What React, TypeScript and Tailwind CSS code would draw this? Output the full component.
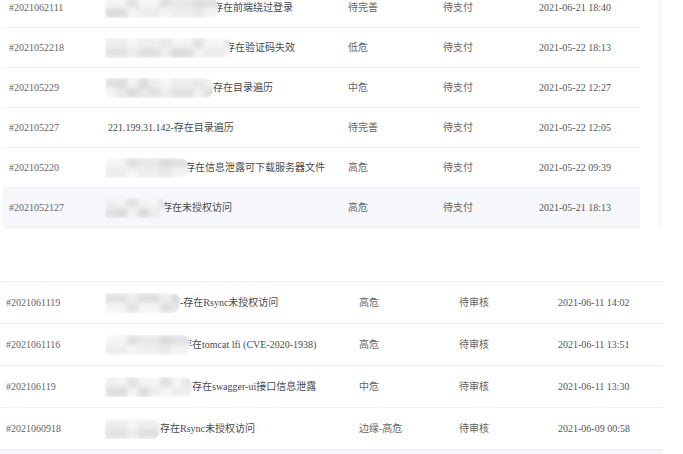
import React from "react";

const FONT = { fontFamily: '"Liberation Serif", "Noto Sans CJK SC", serif' };

function Mosaic({ w, seed, h = 20 }: { w: number; seed: number; h?: number }) {
  const cols = Math.ceil(w / 11);
  const shades = ["#ededed", "#e2e2e2", "#f3f3f3", "#dcdcdc", "#e8e8e8", "#efefef", "#e0e0e0", "#f5f5f5"];
  const cells: string[] = [];
  for (let r = 0; r < 2; r++) {
    for (let c = 0; c < cols; c++) {
      const idx = (c * 7 + r * 3 + seed * 5 + ((c * c + seed) % 3)) % shades.length;
      cells.push(r === 0 ? shades[(idx + 2) % shades.length] : shades[idx]);
    }
  }
  return (
    <div className="relative z-10 shrink-0 overflow-hidden rounded-r-[8px]" style={{ width: w, height: h }}>
      <div
        className="grid blur-[2px]"
        style={{ gridTemplateColumns: `repeat(${cols}, 11px)`, gridTemplateRows: `${h / 2}px ${h / 2}px` }}
      >
        {cells.map((c, i) => (
          <div key={i} style={{ background: c }} />
        ))}
      </div>
    </div>
  );
}

type Row = { id: string; blur: number; text: string; overlap?: number; level: string; status: string; time: string };

const top: Row[] = [
  { id: "#2021062111", blur: 113, text: "存在前端绕过登录", overlap: 5, level: "待完善", status: "待支付", time: "2021-06-21 18:40" },
  { id: "#2021052218", blur: 125, text: "存在验证码失效", overlap: 5, level: "低危", status: "待支付", time: "2021-05-22 18:13" },
  { id: "#202105229", blur: 108, text: "存在目录遍历", level: "中危", status: "待支付", time: "2021-05-22 12:27" },
  { id: "#202105227", blur: 0, text: "221.199.31.142-存在目录遍历", level: "待完善", status: "待支付", time: "2021-05-22 12:05" },
  { id: "#202105220", blur: 83, text: "存在信息泄露可下载服务器文件", overlap: 3, level: "高危", status: "待支付", time: "2021-05-22 09:39" },
  { id: "#2021052127", blur: 60, text: "存在未授权访问", overlap: 3, level: "高危", status: "待支付", time: "2021-05-21 18:13" },
];

const bottom: Row[] = [
  { id: "#2021061119", blur: 75, text: "-存在Rsync未授权访问", level: "高危", status: "待审核", time: "2021-06-11 14:02" },
  { id: "#2021061116", blur: 85, text: "存在tomcat lfi (CVE-2020-1938)", overlap: 8, level: "高危", status: "待审核", time: "2021-06-11 13:51" },
  { id: "#202106119", blur: 87, text: "存在swagger-ui接口信息泄露", level: "中危", status: "待审核", time: "2021-06-11 13:30" },
  { id: "#2021060918", blur: 55, text: "存在Rsync未授权访问", level: "边缘-高危", status: "待审核", time: "2021-06-09 00:58" },
];

function Name({ r, seed }: { r: Row; seed: number }) {
  if (!r.blur) return <span className="pl-[3px] text-[#4a4a4a]">{r.text}</span>;
  return (
    <div className="flex items-center">
      <Mosaic w={r.blur} seed={seed} />
      <span className="whitespace-nowrap text-[#4a4a4a]" style={{ marginLeft: -(r.overlap ?? 0) }}>
        {r.text}
      </span>
    </div>
  );
}

export default function App() {
  return (
    <div className="h-[454px] w-[683px] overflow-hidden bg-white text-[10px]" style={FONT}>
      <div className="-mt-[12px] flex">
        <div className="ml-[3px] w-[637px]">
          {top.map((r, i) => (
            <div
              key={r.id}
              className={`flex h-[40px] items-center border-b border-[#eef0f4] ${i === 5 ? "bg-[#f5f7fa]" : ""}`}
            >
              <div className="w-[102px] pl-[6px] text-[#666]">{r.id}</div>
              <div className="w-[243px]">
                <Name r={r} seed={i} />
              </div>
              <div className="w-[95px] text-[#666]">{r.level}</div>
              <div className="w-[96px] text-[#666]">{r.status}</div>
              <div className="flex-1 text-[#555]">{r.time}</div>
            </div>
          ))}
        </div>
        <div className="w-[20px] border-r border-[#f0f0f0]" />
      </div>
      <div className="mt-[53px] w-[663px] border-t border-[#eef0f4]">
        {bottom.map((r, i) => (
          <div key={r.id} className="flex h-[42px] items-center border-b border-[#eef0f4]">
            <div className="w-[105px] pl-[6px] text-[#666]">{r.id}</div>
            <div className="w-[254px]">
              <Name r={r} seed={i + 3} />
            </div>
            <div className="w-[100px] text-[#666]">{r.level}</div>
            <div className="w-[99px] text-[#666]">{r.status}</div>
            <div className="flex-1 text-[#555]">{r.time}</div>
          </div>
        ))}
        <div className="h-[20px] bg-[#f5f7fa]" />
      </div>
    </div>
  );
}
